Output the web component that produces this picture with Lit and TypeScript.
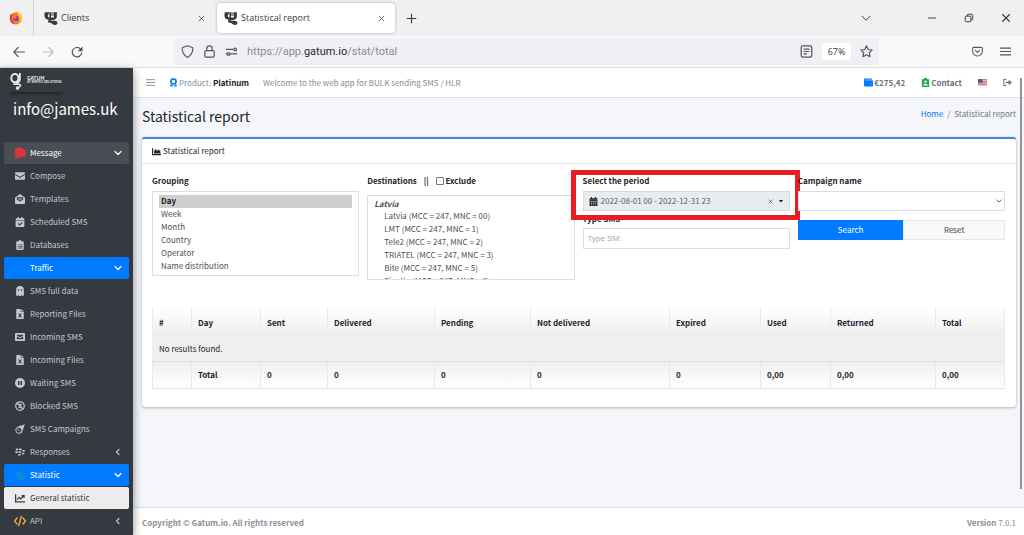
import { LitElement, html, css, svg, nothing, TemplateResult, SVGTemplateResult } from "lit";
import { customElement, property } from "lit/decorators.js";
import { classMap } from "lit/directives/class-map.js";

/* Icon shapes on a 16 by 16 grid. */
const shapes: Record<string, SVGTemplateResult> = {
  comment: svg`<path fill="#d9363e" d="M2 1.500 6 .5l4.500.8L14.500 3.500l1.500 5-2 4.500-5 .5L5 15l-5 1L2.500 12 .5 8z"/>`,
  envelope: svg`<path fill="currentColor" d="M1.500 2h13A1.500 1.500 0 0 1 16 3.500v.8L8 9.200 0 4.300v-.8A1.500 1.500 0 0 1 1.500 2zM0 6l8 5 8-5v6.500a1.500 1.500 0 0 1-1.500 1.500h-13A1.500 1.500 0 0 1 0 12.500z"/>`,
  envelopeOpen: svg`<path fill="currentColor" fill-rule="evenodd" d="M8 0l7.200 5.200c.5.400.8.900.8 1.500v7.800a1.500 1.500 0 0 1-1.500 1.500h-13A1.500 1.500 0 0 1 0 14.500V6.700c0-.6.300-1.100.8-1.500zM3 5v3.800l5 3 5-3V5zM5 6.300h6v1H5zM5 8.300h6v1H5z"/>`,
  calendarCheck: svg`<path fill="currentColor" fill-rule="evenodd" d="M4 0h2v2h4V0h2v2h1.500A1.500 1.500 0 0 1 15 3.500V5H1V3.500A1.500 1.500 0 0 1 2.500 2H4zM1 6h14v8.500a1.500 1.500 0 0 1-1.500 1.500h-11A1.500 1.500 0 0 1 1 14.500zM7.300 14l5-5-1.200-1.200-3.800 3.800-1.900-1.900-1.200 1.200z"/>`,
  clipboard: svg`<path fill="currentColor" fill-rule="evenodd" d="M3.500 2H6a2 2 0 0 1 4 0h2.500A1.500 1.500 0 0 1 14 3.500v11a1.500 1.500 0 0 1-1.500 1.500h-9A1.500 1.500 0 0 1 2 14.500v-11A1.500 1.500 0 0 1 3.500 2zM4.500 7v1.400H6V7zm2.500 0v1.400h5V7zM4.500 9.500v1.400H6V9.500zm2.500 0v1.400h5V9.500zM4.500 12v1.400H6V12zm2.500 0v1.400h5V12z"/>`,
  ghost: svg`<path fill="currentColor" fill-rule="evenodd" d="M8 0a6.200 6.200 0 0 1 6.200 6.200V15l-1.700.8-1.800-1.500L9.300 16H6.700l-1.400-1.700-1.800 1.500L1.800 15V6.200A6.200 6.200 0 0 1 8 0zM5.600 5a1.300 1.300 0 1 0 0 2.600 1.300 1.300 0 0 0 0-2.600zm4.800 0a1.300 1.300 0 1 0 0 2.600 1.300 1.300 0 0 0 0-2.600z"/>`,
  fileExcel: svg`<path fill="currentColor" fill-rule="evenodd" d="M3 0h6v4.500h5V15a1 1 0 0 1-1 1H3a1 1 0 0 1-1-1V1a1 1 0 0 1 1-1zM10 0l4 3.500h-4zM4.800 7l2 3.300-2 3.400h1.900L8 11.400l1.300 2.300h1.900l-2-3.400 2-3.300H9.300L8 9.200 6.700 7z"/>`,
  envelopeSquare: svg`<path fill="currentColor" fill-rule="evenodd" d="M1.500 1.500h13A1.500 1.500 0 0 1 16 3v10a1.500 1.500 0 0 1-1.500 1.500h-13A1.500 1.500 0 0 1 0 13V3a1.500 1.500 0 0 1 1.500-1.500zM3 4.500v1l5 2.800 5-2.800v-1zm0 2.800v4.200h10V7.300L8 10z"/>`,
  pause: svg`<path fill="currentColor" fill-rule="evenodd" d="M8 0a8 8 0 1 1 0 16A8 8 0 0 1 8 0zM4.800 4.800v6.400h2.400V4.800zm4 0v6.400h2.400V4.800z"/>`,
  ban: svg`<g fill="none" stroke="currentColor" stroke-width="2"><circle cx="8" cy="8" r="6.800"/><path d="M3.300 3.300l9.400 9.400M5.500 9.500l3 1.500M7.500 5l3.300 1.500"/></g>`,
  meteor: svg`<path fill="currentColor" fill-rule="evenodd" d="M16 0l-2.500 5.500.8.500-2 3.500A5.800 5.800 0 1 1 4 4.600L9 2l.5 1zM6.200 6a4 4 0 1 0 0 8 4 4 0 0 0 0-8zM5.300 8a1.200 1.200 0 1 1 0 2.400 1.200 1.200 0 0 1 0-2.400zm2.500 2.500a.8.800 0 1 1 0 1.600.8.800 0 0 1 0-1.600z"/>`,
  blackberry: svg`<path fill="currentColor" d="M1.500 2.500h2.700a1.300 1.300 0 0 1 0 2.600H1zM6.800 2.500h2.700a1.300 1.300 0 0 1 0 2.600H6.300zM.8 6.800h2.700a1.300 1.300 0 0 1 0 2.600H.3zM6 6.800h2.700a1.300 1.300 0 0 1 0 2.600H5.500zM12 4.700h2.700a1.300 1.300 0 0 1 0 2.600h-3.200zM11.200 9h2.700a1.300 1.300 0 0 1 0 2.600h-3.200zM5.300 11h2.700a1.300 1.300 0 0 1 0 2.600H4.800z"/>`,
  dots: svg`<g fill="none" stroke="#17a2a8" stroke-width="1.700" stroke-dasharray="2.200 1.200"><path d="M2 3.500h11M1 7h13M3 10.500h12M2 14h13M5 2.500l7 12"/></g>`,
  chartLine: svg`<path fill="none" stroke="currentColor" stroke-width="2" d="M1 2v12h15M3.500 10.500L6.500 7l2.500 2.500 5-5M10.500 4H14.500V8"/>`,
  code: svg`<path fill="none" stroke="#f0a34a" stroke-width="1.900" stroke-linecap="round" stroke-linejoin="round" d="M4 4L.8 8 4 12M12 4l3.200 4L12 12M9.600 2L6.400 14"/>`,
  chevDown: svg`<path fill="none" stroke="currentColor" stroke-width="2.400" stroke-linecap="round" stroke-linejoin="round" d="M2 5l6 6 6-6"/>`,
  chevLeft: svg`<path fill="none" stroke="currentColor" stroke-width="2.400" stroke-linecap="round" stroke-linejoin="round" d="M10 3L5 8l5 5"/>`,
  bars: svg`<path stroke="currentColor" stroke-width="1.700" d="M0 3h16M0 8h16M0 13h16"/>`,
  award: svg`<path fill="#007bff" fill-rule="evenodd" d="M8 0l2.400.9 2.500.6.400 2.500L14.600 6.200l-1.300 2.200-.4 2.500-2.500.6L8 12.300l-2.400-.8-2.500-.6-.4-2.500L1.400 6.200 2.700 4l.4-2.500L5.600.9zM8 3.200a3 3 0 1 0 0 6 3 3 0 0 0 0-6zM3 11.500l4 1.500-1.500 3-1.500-1.500-2.500.2zM13 11.500L9 13l1.500 3 1.500-1.500 2.500.2z"/>`,
  wallet: svg`<path fill="#007bff" d="M1.500 1H14v2H2v1h12.500A1.500 1.500 0 0 1 16 5.500v8a1.500 1.500 0 0 1-1.500 1.500h-13A1.500 1.500 0 0 1 0 13.500v-11A1.500 1.500 0 0 1 1.500 1z"/><circle cx="12.800" cy="9.500" r="1" fill="#5aa9ff"/>`,
  contact: svg`<path fill="#28a745" fill-rule="evenodd" d="M5 0h6v2h3.500v14h-13V2H5zM8 4.500a2 2 0 1 0 0 4 2 2 0 0 0 0-4zM4 13.500h8c0-2-1-3.500-2.500-3.500h-3C5 10 4 11.500 4 13.500z"/>`,
  flag: svg`<path fill="#f3dfe1" d="M0 2h16v12H0z"/><path stroke="#cf4a55" stroke-width="1.500" d="M0 3h16M0 6h16M0 9h16M0 12h16"/><path fill="#4a5a94" d="M0 2h8v6.500H0z"/>`,
  signOut: svg`<path fill="none" stroke="currentColor" stroke-width="1.800" d="M6 2.500H1.500v11H6"/><path fill="currentColor" d="M5 6.500h5V3l6 5-6 5V9.500H5z"/>`,
  chartArea: svg`<path fill="currentColor" d="M0 2h2v10.500h14v2H0zM3.500 11.500V7.500L6.500 3.500l2.500 3L12 4.500l3 3.500v3.500z"/>`,
  calendar: svg`<path fill="currentColor" d="M3.500 0h2v2h5V0h2v2H15v3H1V2h2.500z"/><path fill="currentColor" fill-rule="evenodd" d="M1 5h14v11H1zM4.600 6v9h.7V6zM7.700 6v9h.7V6zM10.800 6v9h.7V6zM2 8v.7h12V8zM2 11.500v.7h12v-.7z"/>`,
  caret: svg`<path fill="currentColor" d="M2 5h12l-6 7z"/>`,
  close: svg`<path stroke="currentColor" stroke-width="1.700" d="M2 2l12 12M14 2L2 14"/>`,
  plus: svg`<path stroke="currentColor" stroke-width="1.600" d="M8 1v14M1 8h14"/>`,
  minus: svg`<path stroke="currentColor" stroke-width="1.500" d="M1.500 8h13"/>`,
  restore: svg`<g fill="none" stroke="currentColor" stroke-width="1.500"><rect x="2" y="5" width="9" height="9" rx="1.500"/><path d="M5 5V3.500A1.500 1.500 0 0 1 6.500 2h5A2.500 2.500 0 0 1 14 4.500v5a1.500 1.500 0 0 1-1.500 1.500H11"/></g>`,
  thinDown: svg`<path fill="none" stroke="currentColor" stroke-width="1.500" d="M1 4.500l7 7 7-7"/>`,
  back: svg`<path fill="none" stroke="currentColor" stroke-width="1.500" stroke-linecap="round" d="M15.200 8H1.200M7 2L1 8l6 6"/>`,
  forward: svg`<path fill="none" stroke="currentColor" stroke-width="1.500" stroke-linecap="round" d="M.8 8h14M9 2l6 6-6 6"/>`,
  reload: svg`<path fill="none" stroke="currentColor" stroke-width="1.600" stroke-linecap="round" d="M14.200 9.500A6.300 6.300 0 1 1 12.500 3.800L14.500 5.800"/><path fill="currentColor" d="M15.300.8V7H9z"/>`,
  shield: svg`<path fill="none" stroke="currentColor" stroke-width="1.400" stroke-linejoin="round" d="M8 1l6.500 2.300c.3 5-1.700 9.500-6.500 12C3.200 12.800 1.200 8.300 1.500 3.300z"/>`,
  lock: svg`<g fill="none" stroke="currentColor" stroke-width="1.500"><rect x="2.200" y="7" width="11.600" height="8" rx="1.500"/><path d="M4.700 7V4.300a3.300 3.300 0 0 1 6.600 0V7"/></g>`,
  switches: svg`<g fill="none" stroke="currentColor" stroke-width="1.500"><path d="M1 5.500h9M6 11h9M2.500 11H1"/><circle cx="12.500" cy="5.500" r="1.700"/><circle cx="4.300" cy="11" r="1.700"/></g>`,
  reader: svg`<g fill="none" stroke="currentColor" stroke-width="1.500"><rect x="1.500" y="1" width="13" height="14" rx="2"/><path d="M4.500 5h7M4.500 8h7M4.500 11h4"/></g>`,
  star: svg`<path fill="none" stroke="currentColor" stroke-width="1.400" stroke-linejoin="round" d="M8 1l2.100 4.500 4.900.6-3.600 3.400.9 4.900L8 12l-4.300 2.400.9-4.900L1 6.100l4.900-.6z"/>`,
  pocket: svg`<path fill="none" stroke="currentColor" stroke-width="1.500" stroke-linecap="round" stroke-linejoin="round" d="M2.500 2h11A1.500 1.500 0 0 1 15 3.500V8A7 6.500 0 0 1 1 8V3.500A1.500 1.500 0 0 1 2.500 2zM4.800 6.300L8 9.300l3.200-3"/>`,
  firefox: svg`<circle cx="8" cy="8.500" r="7" fill="#ff7a1f"/><path fill="#ffc72e" d="M10 .5c2.500 1.700 5 4.500 5 8a7 7 0 0 1-5 6.500c2-2 2.500-4 2-6.500-.5-3-2.800-4-2-8z"/><path fill="#f0353e" d="M2 3l2 1.800L3 10l4 5.200A7 7 0 0 1 1 8.500C1 6 1.300 4.500 2 3z"/><circle cx="8" cy="8.500" r="3" fill="#7a48b5"/><path fill="#ff8f2a" d="M4 5.500l3.500.8L9 8 6 8.500z"/>`,
  gatum: svg`<path fill="currentColor" d="M.8 1.500h5v2.300H4.800c-.8 1.500-.3 3.200.8 3.700h.6V1.500H8v6h3.300v-6h3.400V6c0 2.500-1.500 4-4 4.200H8.500c-.8 0-.8.900 0 .9h3.700c4 0 4.300 4.900.5 4.900-2.500 0-3-1.300-4.400-2.300L4.500 12.800c0-1.300.5-2 1.300-2.700C2.300 9.800.5 8 .5 5z"/><path fill="#8a8a8a" d="M8 1.500h3.300v4H8z"/>`,
  brand: svg`<g fill="none" stroke="currentColor"><ellipse cx="6.500" cy="4.800" rx="3.400" ry="3.900" stroke-width="1.900"/><path stroke-width="1.700" d="M11.200 0v5.500c0 2.500-1.500 3.800-3.500 4.200"/><path stroke-width="1.500" d="M5 10.500h4c3.500 0 3.500 2 1.500 2.800"/></g><circle cx="9" cy="14.200" r="1.700" fill="currentColor"/>`,
};

const icon = (name: string, cls = ""): TemplateResult =>
  html`<svg class="icon ${cls}" viewBox="0 0 16 16" aria-hidden="true">${shapes[name]}</svg>`;

const base = css`
  * { box-sizing: border-box; }
  .icon { display: block; flex: none; width: 10px; height: 10px; }
  button { appearance: none; border: 0; background: none; padding: 0; margin: 0; font: inherit; color: inherit; }
  a { color: inherit; text-decoration: none; }
`;

@customElement("browser-bar")
class BrowserBar extends LitElement {
  static styles = [base, css`
    :host { display: block; font: 9px/16px "Open Sans", "Noto Sans", sans-serif; color: #38383d; }
    .icon { width: 12px; height: 12px; }
    .tabs { display: flex; align-items: center; height: 36px; background: #f0f0f0; }
    .pinned { display: flex; align-items: center; padding: 0 10px 0 9px; height: 36px; margin-right: 3px; border-right: 1px solid #d4d4d8; }
    .pinned .icon, .tab .logo { width: 14px; height: 14px; }
    .tab { display: flex; align-items: center; gap: 3px; width: 178px; height: 30px; padding: 0 10px 0 7px; border-radius: 4px; margin-right: 2px; }
    .tab.active { background: #fff; box-shadow: 0 0 3px #0000004d; }
    .tab .name { flex: 1; }
    .tab .close { width: 7px; height: 7px; }
    .add { margin-left: 9px; }
    .add .icon { width: 11px; height: 11px; }
    .window { display: flex; align-items: center; margin-left: auto; padding-right: 13px; gap: 27px; }
    .window .icon { width: 10px; height: 10px; }
    .list { margin-right: 29px; }
    .tools { display: flex; align-items: center; height: 32px; padding: 0 13px; background: #f9f9fb; border-bottom: 1px solid #dedee2; }
    .nav { display: flex; gap: 17px; width: 161px; color: #55555a; }
    .off { color: #bbbbc0; }
    .url { flex: 1; display: flex; align-items: center; height: 27px; padding: 0 6px 0 7px; gap: 9px; background: #f0f0f4; border-radius: 3px; color: #55555a; }
    .address { flex: 1; font: 11px/16px "Roboto", "Open Sans", sans-serif; color: #8a8a90; }
    .address b { font-weight: 400; color: #25252a; }
    .zoom { width: 29px; height: 17px; background: #fff; border-radius: 2px; color: #38383d; }
    .url .icon { width: 13px; height: 13px; }
    .right { display: flex; gap: 17px; margin-left: 93px; color: #55555a; }
    .right .icon { width: 11px; height: 11px; }
  `];
  render() {
    return html`
      <div class="tabs">
        <div class="pinned">${icon("firefox")}</div>
        ${["Clients", "Statistical report"].map((name, i) => html`
          <div class=${classMap({ tab: true, active: i === 1 })}>
            ${icon("gatum", "logo")}<span class="name">${name}</span>
            <button aria-label="Close tab">${icon("close", "close")}</button>
          </div>`)}
        <button class="add" aria-label="New tab">${icon("plus")}</button>
        <div class="window">
          <button class="list" aria-label="List tabs">${icon("thinDown")}</button>
          <button aria-label="Minimise">${icon("minus")}</button>
          <button aria-label="Restore">${icon("restore")}</button>
          <button aria-label="Close">${icon("close")}</button>
        </div>
      </div>
      <div class="tools">
        <div class="nav">
          <button aria-label="Back">${icon("back")}</button>
          <button class="off" aria-label="Forward">${icon("forward")}</button>
          <button aria-label="Reload">${icon("reload")}</button>
        </div>
        <div class="url">
          ${icon("shield")}${icon("lock")}${icon("switches")}
          <span class="address" role="textbox" aria-label="Address">https://app.<b>gatum.io</b>/stat/total</span>
          ${icon("reader")}
          <button class="zoom">67%</button>
          ${icon("star")}
        </div>
        <div class="right">
          <button aria-label="Pocket">${icon("pocket")}</button>
          <button aria-label="Menu">${icon("bars")}</button>
        </div>
      </div>`;
  }
}

interface Item { label: string; icon?: string; state?: "open" | "active" | "current"; arrow?: "chevDown" | "chevLeft"; }

const items: Item[] = [
  { label: "Message", icon: "comment", state: "open", arrow: "chevDown" },
  { label: "Compose", icon: "envelope" },
  { label: "Templates", icon: "envelopeOpen" },
  { label: "Scheduled SMS", icon: "calendarCheck" },
  { label: "Databases", icon: "clipboard" },
  { label: "Traffic", state: "active", arrow: "chevDown" },
  { label: "SMS full data", icon: "ghost" },
  { label: "Reporting Files", icon: "fileExcel" },
  { label: "Incoming SMS", icon: "envelopeSquare" },
  { label: "Incoming Files", icon: "fileExcel" },
  { label: "Waiting SMS", icon: "pause" },
  { label: "Blocked SMS", icon: "ban" },
  { label: "SMS Campaigns", icon: "meteor" },
  { label: "Responses", icon: "blackberry", arrow: "chevLeft" },
  { label: "Statistic", icon: "dots", state: "active", arrow: "chevDown" },
  { label: "General statistic", icon: "chartLine", state: "current" },
  { label: "API", icon: "code", arrow: "chevLeft" },
];

@customElement("side-menu")
class SideMenu extends LitElement {
  @property({ attribute: false }) items: Item[] = [];
  static styles = [base, css`
    :host { display: block; overflow: hidden; background: #343a40; color: #c2c7d0; box-shadow: 0 4px 8px #00000040, 0 2px 10px #00000038; z-index: 1; }
    .brand { display: flex; gap: 2px; width: 56px; height: 24px; margin-left: 8px; padding-top: 5px; color: #e4e6e8; box-shadow: 0 4px 3px -2px #00000059; }
    .brand .icon { width: 17px; height: 17px; }
    .words { display: flex; flex-direction: column; font-size: 5px; line-height: 5px; font-weight: 700; padding-top: 2px; white-space: nowrap; }
    .words small { font-size: 3px; line-height: 4px; }
    .user { display: block; padding: 2px 13px 0; font-size: 15px; line-height: 30px; color: #fff; }
    nav { display: flex; flex-direction: column; gap: 1px; padding: 18px 4px 0; }
    .item { display: flex; align-items: center; height: 22px; padding: 0 7px 0 10px; gap: 4px; border-radius: 2px; white-space: nowrap; }
    .slot { display: flex; justify-content: center; width: 12px; }
    .open .slot .icon, .code { width: 12px; height: 12px; }
    .label { flex: 1; }
    .item .arrow { width: 8px; height: 8px; }
    .open { background: #484e53; color: #fff; }
    .active { background: #007bff; color: #fff; }
    .current { background: #ececed; color: #343a40; }
  `];
  render() {
    return html`
      <a class="brand" href="#">${icon("brand")}<span class="words">GATUM<small>BY SEMYCA SOLUTIONS</small></span></a>
      <a class="user" href="#">info@james.uk</a>
      <nav>
        ${this.items.map((it) => html`
          <a href="#" class=${classMap({ item: true, [it.state ?? "plain"]: true })}>
            <span class="slot">${it.icon ? icon(it.icon, it.icon) : nothing}</span>
            <span class="label">${it.label}</span>
            ${it.arrow ? icon(it.arrow, "arrow") : nothing}
          </a>`)}
      </nav>`;
  }
}

@customElement("report-filters")
class ReportFilters extends LitElement {
  static styles = [base, css`
    :host { display: grid; grid-template-columns: repeat(4, 1fr); gap: 8px; align-items: start; }
    .field { position: relative; display: flex; flex-direction: column; }
    .label { font-weight: 700; line-height: 16px; margin-bottom: 2px; }
    .row { display: flex; align-items: center; height: 16px; margin-bottom: 6px; gap: 7px; font-weight: 700; }
    .row label { display: flex; align-items: center; gap: 2px; }
    input[type="checkbox"] { appearance: none; width: 8px; height: 8px; margin: 0; border: 1px solid #777; border-radius: 1px; background: #fff; }
    select, input[type="text"] { appearance: none; font: inherit; color: #495057; background: #fff; border: 1px solid #dcdfe2; border-radius: 0; outline: 0; margin: 0; }
    select[multiple] { height: 85px; padding: 3px 6px; scrollbar-width: none; overflow: hidden; }
    select[multiple] option { padding: 0 2px; height: 13px; min-height: 13px; line-height: 13px; color: #495057; }
    select[multiple] option:checked { font-weight: 700; color: #212529; }
    select.tree { padding: 2px 4px; }
    optgroup { font-weight: 700; font-style: italic; line-height: 13px; color: #495057; }
    select.tree optgroup option { padding-left: 12px; font-weight: 400; font-style: normal; }
    .drop { position: relative; display: flex; flex-direction: column; }
    .drop select { height: 20px; }
    .drop .icon { position: absolute; right: 3px; top: 7px; width: 6px; height: 6px; color: #495057; }
    .period { display: flex; align-items: center; height: 20px; padding: 0 5px; gap: 3px; background: #e9ecef; border: 1px solid #d5d8dc; color: #5a6067; text-align: left; }
    .period .icon { width: 9px; height: 9px; color: #212529; }
    .period .text { flex: 1; }
    .period .clear { width: 5px; height: 5px; margin-right: 2px; }
    .period .caret { width: 6px; height: 6px; }
    .frame { position: absolute; inset: -3px -10px auto -12px; height: 50px; border: 5px solid #ea1b25; pointer-events: none; }
    .type { margin-bottom: 1px; }
    input[type="text"] { height: 21px; padding: 0 4px; font: 8px "Liberation Sans", sans-serif; }
    input::placeholder { color: #a5a9ad; }
    .buttons { display: grid; grid-template-columns: 52fr 50fr; margin-top: 9px; }
    .buttons button { height: 20px; background: #f8f9fa; border: 1px solid #e6e8ea; color: #444; }
    .buttons .search { background: #007bff; border-color: #007bff; color: #fff; }
  `];
  render() {
    return html`
      <div class="field">
        <label class="label" for="grouping">Grouping</label>
        <select id="grouping" multiple>
          ${["Day", "Week", "Month", "Country", "Operator", "Name distribution"].map((o, i) => html`<option ?selected=${i === 0}>${o}</option>`)}
        </select>
      </div>
      <div class="field">
        <div class="row">
          <label for="dest">Destinations</label><span>||</span>
          <label><input type="checkbox">Exclude</label>
        </div>
        <select id="dest" class="tree" multiple>
          <optgroup label="Latvia">
            ${["Latvia (MCC = 247, MNC = 00)", "LMT (MCC = 247, MNC = 1)", "Tele2 (MCC = 247, MNC = 2)", "TRIATEL (MCC = 247, MNC = 3)", "Bite (MCC = 247, MNC = 5)", "Rigatta (MCC = 247, MNC = 6)"].map((o) => html`<option>${o}</option>`)}
          </optgroup>
        </select>
      </div>
      <div class="field">
        <label class="label" for="period">Select the period</label>
        <button id="period" class="period">
          ${icon("calendar")}<span class="text">2022-08-01 00 - 2022-12-31 23</span>
          ${icon("close", "clear")}${icon("caret", "caret")}
        </button>
        <label class="label type" for="type">Type SMS</label>
        <input id="type" type="text" placeholder="Type SM:">
        <div class="frame"></div>
      </div>
      <div class="field">
        <label class="label" for="campaign">Campaign name</label>
        <div class="drop"><select id="campaign"><option></option></select>${icon("chevDown")}</div>
        <div class="buttons"><button class="search">Search</button><button>Reset</button></div>
      </div>`;
  }
}

interface Column { name: string; share: number; total: string; }

const columns: Column[] = [
  { name: "#", share: 39, total: "" },
  { name: "Day", share: 69, total: "Total" },
  { name: "Sent", share: 67, total: "0" },
  { name: "Delivered", share: 107, total: "0" },
  { name: "Pending", share: 96, total: "0" },
  { name: "Not delivered", share: 139, total: "0" },
  { name: "Expired", share: 91, total: "0" },
  { name: "Used", share: 70, total: "0,00" },
  { name: "Returned", share: 105, total: "0,00" },
  { name: "Total", share: 70, total: "0,00" },
];

@customElement("report-table")
class ReportTable extends LitElement {
  @property({ attribute: false }) columns: Column[] = [];
  static styles = [base, css`
    :host { display: block; }
    table { width: 100%; table-layout: fixed; border-collapse: separate; border-spacing: 0; }
    th, td { padding: 0 6px; text-align: left; line-height: 14px; white-space: nowrap; }
    thead th { height: 27px; padding-top: 4px; background: linear-gradient(#fff, #efefef); border-left: 1px solid #e9ebec; }
    tbody td { height: 28px; padding-top: 2px; padding-left: 7px; background: #efefef; border-bottom: 1px solid #dee0e2; }
    tfoot td { height: 27px; font-weight: 700; background: linear-gradient(#efefef, #fff); border-left: 1px solid #e6e8ea; border-bottom: 1px solid #e2e4e6; }
    thead th:last-child, tfoot td:last-child { border-right: 1px solid #e9ebed; }
  `];
  render() {
    const sum = this.columns.reduce((a, c) => a + c.share, 0);
    return html`
      <table>
        <colgroup>${this.columns.map((c) => html`<col style="width:${(c.share / sum) * 100}%">`)}</colgroup>
        <thead><tr>${this.columns.map((c) => html`<th scope="col">${c.name}</th>`)}</tr></thead>
        <tbody><tr><td colspan=${this.columns.length}>No results found.</td></tr></tbody>
        <tfoot><tr>${this.columns.map((c) => html`<td>${c.total}</td>`)}</tr></tfoot>
      </table>`;
  }
}

@customElement("app-root")
class AppRoot extends LitElement {
  static styles = [base, css`
    :host { display: flex; flex-direction: column; height: 100vh; overflow: hidden; font: 8px/14px "Noto Sans CJK SC", "Source Sans Pro", sans-serif; color: #212529; }
    .app { flex: 1; min-height: 0; display: grid; grid-template-columns: 133px minmax(0, 1fr); }
    .page { position: relative; display: flex; flex-direction: column; background: #f4f6f9; }
    .top { display: flex; align-items: center; height: 30px; padding: 0 12px 0 13px; background: #fff; border-bottom: 1px solid #dee2e6; color: #868b90; }
    .top a, .top button { display: flex; align-items: center; gap: 1px; }
    .top .icon { width: 9px; height: 9px; }
    .menu { margin-right: 14px; }
    .product { margin-right: 14px; }
    .product b { color: #212529; font-weight: 700; }
    .account { display: flex; align-items: center; gap: 16px; margin-left: auto; font-weight: 700; color: #6c7177; }
    .head { display: flex; justify-content: space-between; padding: 5px 8px 8px 9px; }
    h1 { margin: 0; font-size: 14px; line-height: 26px; font-weight: 400; }
    .crumbs { display: flex; gap: 4px; line-height: 22px; color: #6c757d; }
    .crumbs a { color: #007bff; }
    .card { margin: 0 8px 0 9px; background: #fff; border-top: 2px solid #3d8ddb; border-radius: 3px; box-shadow: 0 0 1px #00000040, 0 1px 3px #00000040; }
    h2 { display: flex; align-items: center; gap: 2px; margin: 0; padding: 0 10px; font-size: 8px; line-height: 24px; font-weight: 400; border-bottom: 1px solid #e6e8ea; }
    h2 .icon { width: 9px; height: 9px; }
    .body { display: flex; flex-direction: column; gap: 27px; padding: 9px 11px 18px 10px; }
    footer { display: flex; justify-content: space-between; margin-top: auto; padding: 0 8px 0 9px; line-height: 30px; height: 28px; background: #fff; border-top: 1px solid #dee2e6; color: #869099; }
    .thumb { position: absolute; right: 2px; top: 10px; bottom: 46px; width: 2px; background: #8f9296; }
  `];
  render() {
    return html`
      <browser-bar></browser-bar>
      <div class="app">
        <side-menu .items=${items}></side-menu>
        <div class="page">
          <div class="top">
            <button class="menu" aria-label="Toggle menu">${icon("bars")}</button>
            <a class="product" href="#">${icon("award")}<span>Product: <b>Platinum</b></span></a>
            <span>Welcome to the web app for BULK sending SMS / HLR</span>
            <div class="account">
              <a href="#">${icon("wallet")}€275,42</a>
              <a href="#">${icon("contact")}Contact</a>
              <a href="#" aria-label="Language">${icon("flag")}</a>
              <a href="#" aria-label="Sign out">${icon("signOut")}</a>
            </div>
          </div>
          <div class="head">
            <h1>Statistical report</h1>
            <div class="crumbs"><a href="#">Home</a><span>/</span><span>Statistical report</span></div>
          </div>
          <section class="card">
            <h2>${icon("chartArea")}Statistical report</h2>
            <div class="body">
              <report-filters></report-filters>
              <report-table .columns=${columns}></report-table>
            </div>
          </section>
          <footer><b>Copyright © Gatum.io. All rights reserved</b><span><b>Version</b> 7.0.1</span></footer>
          <div class="thumb"></div>
        </div>
      </div>`;
  }
}
